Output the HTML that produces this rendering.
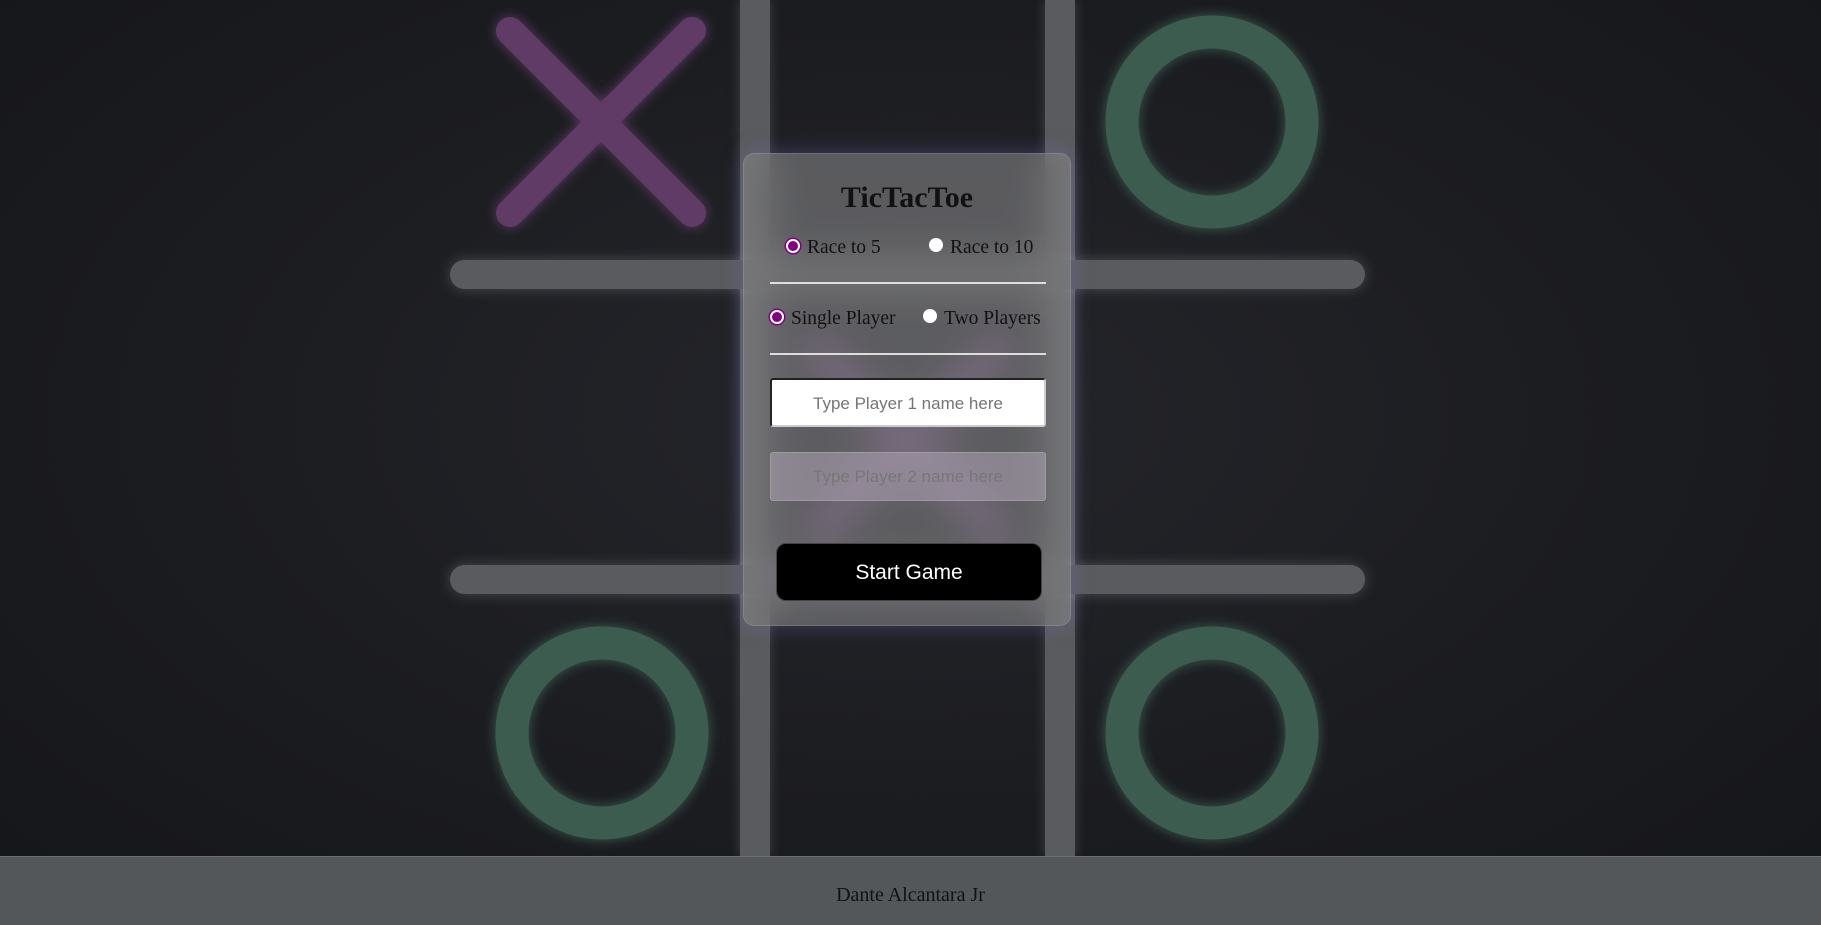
<!DOCTYPE html>
<html><head><style>
html,body{margin:0;padding:0;width:1821px;height:925px;overflow:hidden}
body{background:radial-gradient(ellipse at 50% 45%,#25262b 0%,#1c1d21 50%,#15161a 100%);position:relative;font-family:"Liberation Serif",serif}
.vb{position:absolute;top:0;width:30px;height:856px;background:#5a5b5e;box-shadow:0 0 12px rgba(180,180,190,.25)}
.hb{position:absolute;left:450px;width:915px;height:29px;border-radius:15px;background:#5a5b5e;box-shadow:0 0 14px rgba(180,180,190,.3)}
svg.bg{position:absolute;left:0;top:0}
.modal{position:absolute;left:743px;top:153px;width:328px;height:473px;border-radius:11px;background:rgba(140,140,142,.55);backdrop-filter:blur(18px);-webkit-backdrop-filter:blur(18px);box-shadow:0 0 22px rgba(120,120,200,.35);border:1px solid rgba(200,200,200,.2);box-sizing:border-box}
.t{position:absolute;left:0;width:100%;text-align:center;top:27px;font-size:30px;font-weight:bold;color:#111}
.r{position:absolute;font-size:19.5px;color:#111}
.dot{position:absolute;width:14px;height:14px;border-radius:50%;background:#fff;box-sizing:border-box}
.dot.on{border:2px solid #fff;background:#800080;box-shadow:0 0 0 1.5px #800080}
.hr{position:absolute;left:26px;width:276px;height:2px;background:#ddd}
.in{position:absolute;left:26px;width:276px;height:49px;box-sizing:border-box;border-radius:3px;font-family:"Liberation Sans",sans-serif;font-size:17px;text-align:center;line-height:47px}
.btn{position:absolute;left:32px;top:389px;width:266px;height:58px;background:#000;border-radius:10px;color:#fff;font-family:"Liberation Sans",sans-serif;font-size:21px;text-align:center;line-height:58px;border:1px solid #444;box-sizing:border-box}
.foot{position:absolute;left:0;top:856px;width:1821px;height:69px;background:#53575a;border-top:1px solid #6a6e72;text-align:center;line-height:77px;font-size:20px;color:#111}
</style></head><body>
<svg class="bg" width="1821" height="925">
<defs><filter id="g" x="-30%" y="-30%" width="160%" height="160%"><feGaussianBlur stdDeviation="6" result="b"/><feMerge><feMergeNode in="b"/><feMergeNode in="SourceGraphic"/></feMerge></filter></defs>
<g stroke="#5e3b66" stroke-width="28" stroke-linecap="round" filter="url(#g)">
<line x1="510" y1="31" x2="692" y2="213"/><line x1="692" y1="31" x2="510" y2="213"/>
</g>
<g stroke="#6e4a78" stroke-width="28" stroke-linecap="round" opacity=".8" filter="url(#g)">
<line x1="816" y1="350" x2="998" y2="532"/><line x1="998" y1="350" x2="816" y2="532"/>
</g>
<g fill="none" stroke="#3a5c50" stroke-width="33" filter="url(#g)">
<circle cx="1212" cy="122" r="90"/><circle cx="602" cy="733" r="90"/><circle cx="1212" cy="733" r="90"/>
</g>
</svg>
<div class="vb" style="left:740px"></div><div class="vb" style="left:1045px"></div>
<div class="hb" style="top:260px"></div><div class="hb" style="top:565px"></div>
<div class="modal">
<div class="t">TicTacToe</div>
<div class="dot on" style="left:42px;top:85px"></div><div class="r" style="left:63px;top:83px">Race to 5</div>
<div class="dot" style="left:185px;top:84px"></div><div class="r" style="left:206px;top:83px">Race to 10</div>
<div class="hr" style="top:128px"></div>
<div class="dot on" style="left:26px;top:156px"></div><div class="r" style="left:47px;top:154px">Single Player</div>
<div class="dot" style="left:179px;top:155px"></div><div class="r" style="left:200px;top:154px">Two Players</div>
<div class="hr" style="top:199px"></div>
<div class="in" style="top:224px;background:#fff;border:2px solid #222;border-right-color:#ccc;border-bottom-color:#ccc;color:#757575">Type Player 1 name here</div>
<div class="in" style="top:298px;background:rgba(170,160,175,.6);border:1px solid rgba(200,200,200,.3);color:#777">Type Player 2 name here</div>
<div class="btn">Start Game</div>
</div>
<div class="foot">Dante Alcantara Jr</div>
</body></html>
